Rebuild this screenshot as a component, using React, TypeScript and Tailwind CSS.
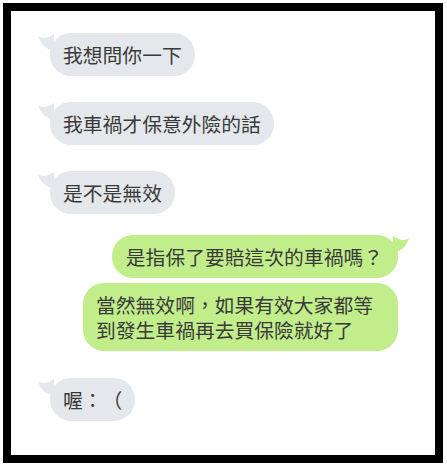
const font = { fontFamily: '"Noto Sans CJK TC", "Noto Sans", sans-serif' };

function LeftBubble({ text, className = "" }: { text: string; className?: string }) {
  return (
    <div className={`relative self-start ${className}`}>
      <svg className="absolute -left-[12px] top-0" width="20" height="20" viewBox="0 0 20 20">
        <path d="M0 3 Q6 8 16 1 L16 18 Q3 15 0 3 Z" fill="#e4e7eb" />
      </svg>
      <div className="relative rounded-[21px] bg-[#e4e7eb] px-[13px] py-[9px] text-[19.8px] leading-[25px] text-[#3a3a3a] whitespace-nowrap [text-spacing-trim:space-all]">
        {text}
      </div>
    </div>
  );
}

function RightBubble({ children, tail = false, className = "" }: { children: React.ReactNode; tail?: boolean; className?: string }) {
  return (
    <div className={`relative self-end ${className}`}>
      {tail && (
        <svg className="absolute -right-[11px] top-0" width="20" height="20" viewBox="0 0 20 20">
          <path d="M20 3 Q14 8 4 1 L4 18 Q17 15 20 3 Z" fill="#c1ee8b" />
        </svg>
      )}
      <div className="relative rounded-[21px] bg-[#c1ee8b] px-[13px] py-[9px] text-[19.8px] leading-[25px] text-[#3a3a3a] whitespace-nowrap [text-spacing-trim:space-all]">
        {children}
      </div>
    </div>
  );
}

export default function App() {
  return (
    <div className="w-[447px] h-[466px] bg-white p-[3px]" style={font}>
      <div className="w-[440px] h-[460px] border-[8px] border-black bg-white">
        <div className="flex flex-col pt-[22px] pl-[39px] pr-[37px]">
          <LeftBubble text="我想問你一下" />
          <LeftBubble text="我車禍才保意外險的話" className="mt-[26px]" />
          <LeftBubble text="是不是無效" className="mt-[26px]" />
          <RightBubble tail className="mt-[21px]">
            <span className="pl-[1px] pr-[2px]">是指保了要賠這次的車禍嗎？</span>
          </RightBubble>
          <RightBubble className="mt-[5px]">
            <div className="w-[289px]">
              <div>當然無效啊，如果有效大家都等</div>
              <div>到發生車禍再去買保險就好了</div>
            </div>
          </RightBubble>
          <LeftBubble text="喔：（" className="mt-[27px]" />
        </div>
      </div>
    </div>
  );
}
